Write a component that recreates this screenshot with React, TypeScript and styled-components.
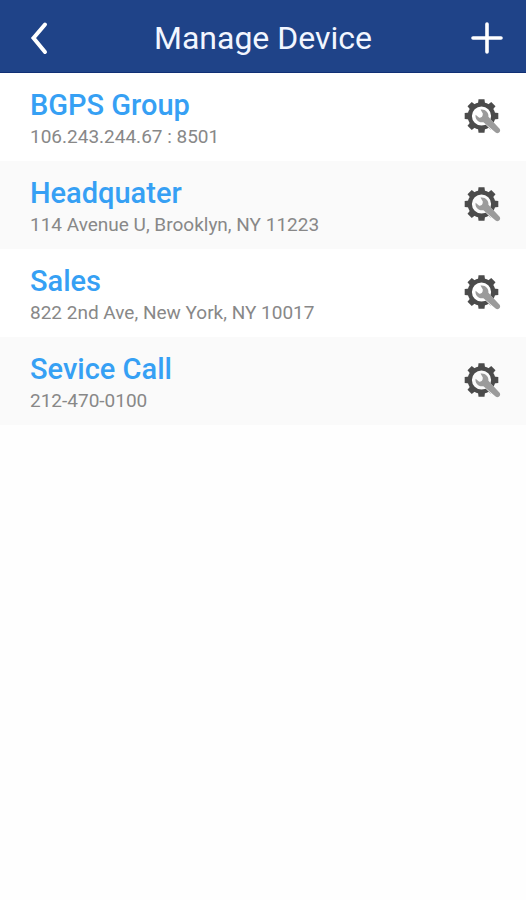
import React from "react";
import styled, { createGlobalStyle } from "styled-components";

const GlobalStyle = createGlobalStyle`
  * { box-sizing: border-box; }
  body {
    margin: 0;
    background: #fefefe;
    font-family: Roboto, "Liberation Sans", sans-serif;
  }
`;

const Header = styled.header`
  display: grid;
  grid-template-columns: 78px 1fr 78px;
  align-items: stretch;
  height: 73px;
  background: #1f4388;
  border-bottom: 1px solid #102f75;
  color: #fff;
`;

const Title = styled.h1`
  margin: 0;
  padding-top: 4px;
  align-self: center;
  text-align: center;
  font-size: 32px;
  line-height: 40px;
  font-weight: 400;
  color: #f2f6ff;
  white-space: nowrap;
`;

const IconButton = styled.button`
  display: flex;
  align-items: center;
  justify-content: center;
  padding: 0;
  border: 0;
  background: none;
  color: inherit;
  cursor: pointer;

  svg { display: block; }
`;

const HeaderButton = styled(IconButton)`
  padding-top: 3px;
`;

const List = styled.ul`
  margin: 0;
  padding: 0;
  list-style: none;
`;

const Row = styled.li`
  display: flex;
  align-items: center;
  justify-content: space-between;
  min-height: 88px;
  padding: 0 23px 0 30px;
  background: #fff;

  &:nth-child(even) { background: #fafafa; }
`;

const Text = styled.div`
  padding-top: 6px;
`;

const Name = styled.h2`
  margin: 0;
  font-size: 29px;
  line-height: 34px;
  font-weight: 500;
  color: #36a0f4;
`;

const Detail = styled.p`
  margin: 0;
  font-size: 19px;
  line-height: 30px;
  color: #888;
`;

const BackIcon = () => (
  <svg width="32" height="36" viewBox="0 0 32 36" fill="none" stroke="currentColor" strokeWidth="4" strokeLinecap="round" strokeLinejoin="miter" aria-hidden="true">
    <path d="M22 4.500 L10.500 18 L22 32" />
  </svg>
);

const PlusIcon = () => (
  <svg width="34" height="34" viewBox="0 0 34 34" fill="none" stroke="currentColor" strokeWidth="3.600" strokeLinecap="round" aria-hidden="true">
    <path d="M17 3 V31 M3 17 H31" />
  </svg>
);

const TEETH = [0, 45, 90, 135, 180, 225, 270, 315];

const ServiceIcon = ({ backdrop }: { backdrop: string }) => (
  <svg width="40" height="40" viewBox="0 0 40 40" aria-hidden="true">
    <g fill="#4b4b4b">
      {TEETH.map((angle) => (
        <path key={angle} d="M14.500 6 L15 1.200 H21 L21.500 6 Z" transform={`rotate(${angle} 18.500 19)  translate(.5 1)`} />
      ))}
    </g>
    <circle cx="18.500" cy="19" r="11.700" fill={backdrop} stroke="#4b4b4b" strokeWidth="4.200" />
    <path d="M25 25 L34 34" stroke={backdrop} strokeWidth="7" strokeLinecap="round" />
    <path
      d="M17.500 12.600 C22 11.800 26 15.400 25.400 19.800 L36.600 31.800 C38.400 34.400 35.400 37.400 32.600 35.600 L20.400 25.200 C15.800 26.200 11.800 22.400 12.600 17.800 L16.200 20.800 C18.600 20.800 20 19.200 19.800 16.400 Z"
      fill="#9b9b9b"
    />
  </svg>
);

const devices = [
  { name: "BGPS Group", detail: "106.243.244.67 : 8501" },
  { name: "Headquater", detail: "114 Avenue U, Brooklyn, NY 11223" },
  { name: "Sales", detail: "822 2nd Ave, New York, NY 10017" },
  { name: "Sevice Call", detail: "212-470-0100" },
];

export default function App() {
  return (
    <>
      <GlobalStyle />
      <Header>
        <HeaderButton type="button" aria-label="Back">
          <BackIcon />
        </HeaderButton>
        <Title>Manage Device</Title>
        <HeaderButton type="button" aria-label="Add device">
          <PlusIcon />
        </HeaderButton>
      </Header>
      <main>
        <List>
          {devices.map((device, index) => (
            <Row key={device.name}>
              <Text>
                <Name>{device.name}</Name>
                <Detail>{device.detail}</Detail>
              </Text>
              <IconButton type="button" aria-label={`Configure ${device.name}`}>
                <ServiceIcon backdrop={index % 2 ? "#fafafa" : "#fff"} />
              </IconButton>
            </Row>
          ))}
        </List>
      </main>
    </>
  );
}
